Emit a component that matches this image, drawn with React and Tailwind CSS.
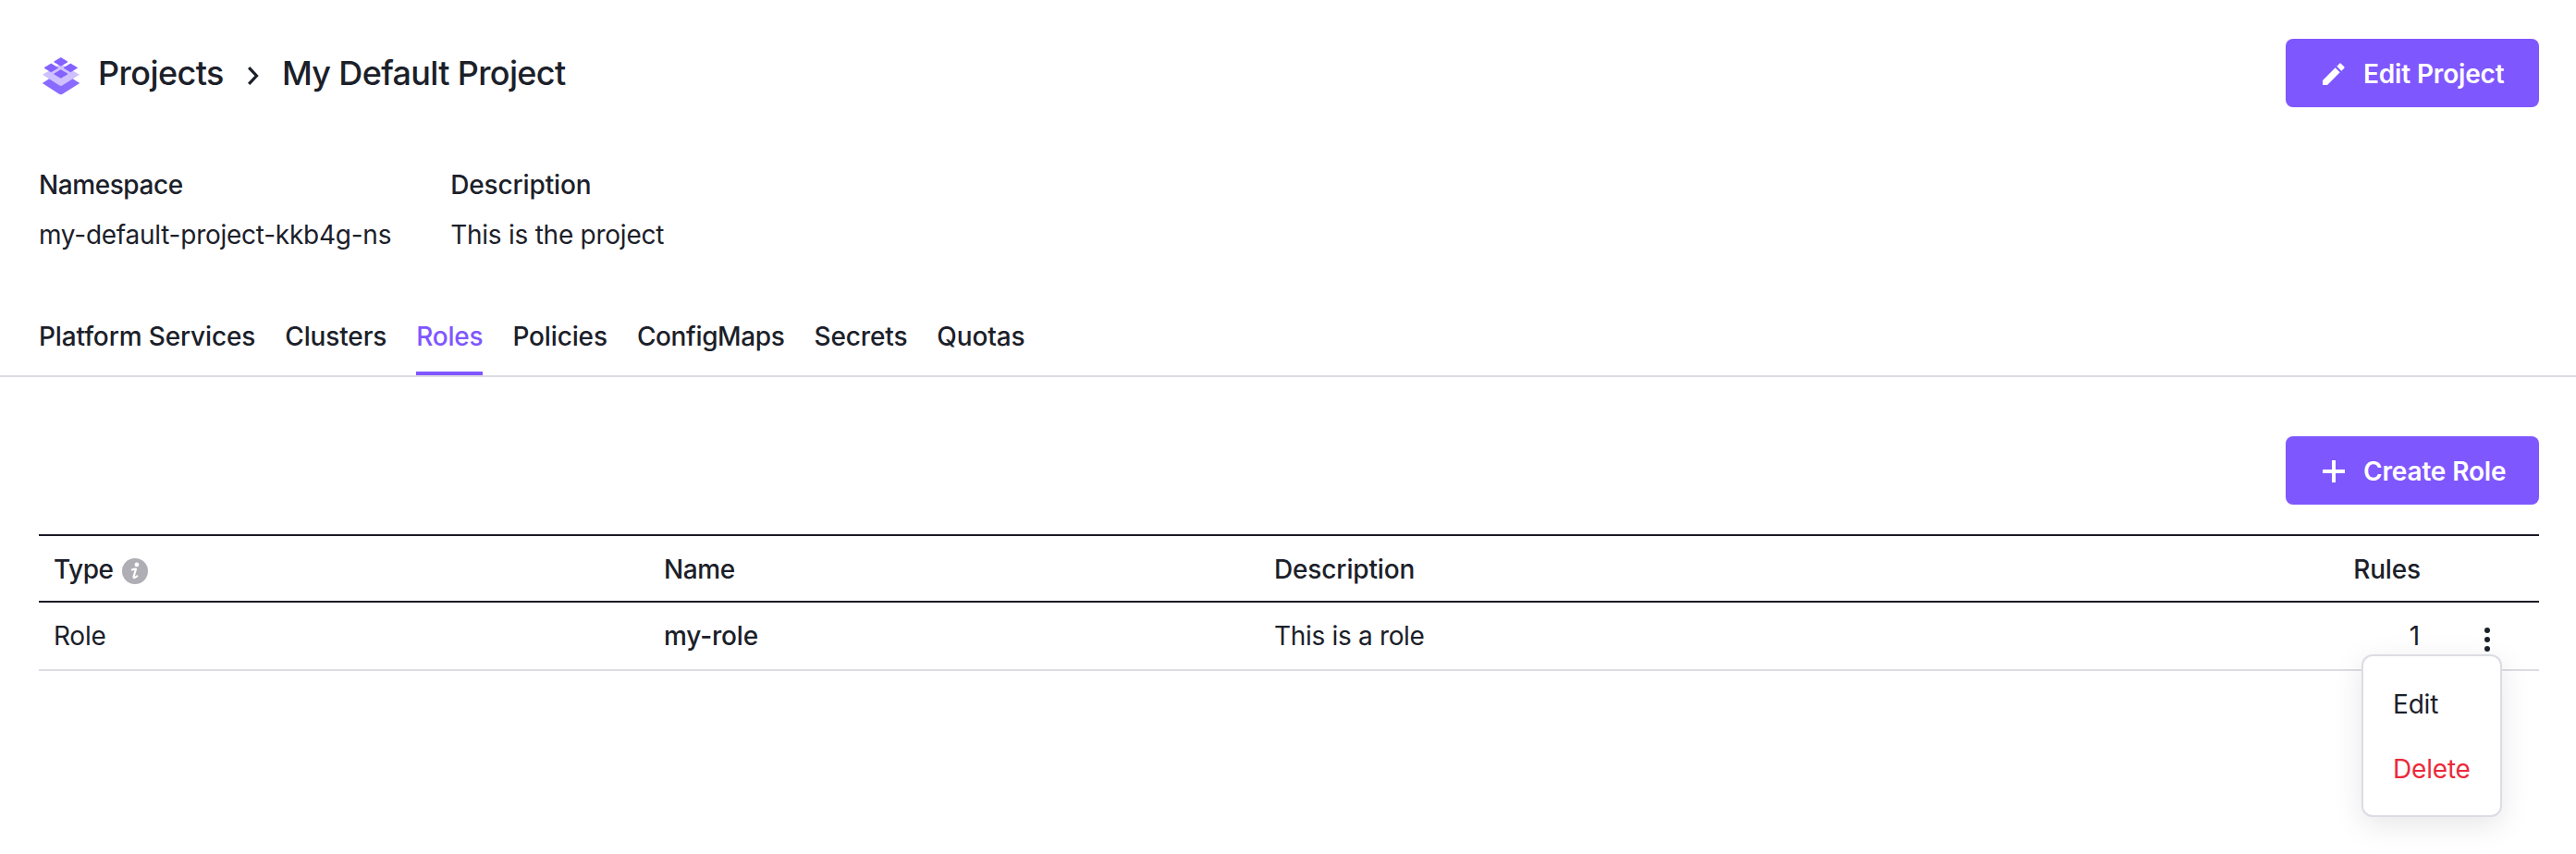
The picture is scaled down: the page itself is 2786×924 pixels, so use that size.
const tabs = ["Platform Services", "Clusters", "Roles", "Policies", "ConfigMaps", "Secrets", "Quotas"];

function tabClass(tab) {
  if (tab === "Roles") return "h-[74px] border-b-4 border-[#7f57ff] pt-[11px] font-medium tracking-[-0.22px] text-[#7f57ff]";
  if (tab === "ConfigMaps") return "h-[74px] pt-[11px] font-medium tracking-[-0.36px]";
  return "h-[74px] pt-[11px] font-medium tracking-[-0.14px]";
}

function ProjectsIcon() {
  return (
    <svg width="42" height="42" viewBox="0 0 42 42" className="shrink-0">
      <path d="M0.800 29 L20.700 16 L41.200 29 L23 40.500 Q20.800 41.900 18.600 40.500 Z" fill="#8a6bff" />
      <path d="M1 19.800 L20.800 8 L41 19.800 L22.200 31.600 Q20.800 32.400 19.400 31.600 Z" fill="#cfc1ff" />
      <g fill="#8462ff" stroke="#8462ff" strokeWidth="1" strokeLinejoin="round">
        <path d="M20.800 1.600 L28 5.900 L20.800 10.200 L13.600 5.900 Z" />
        <path d="M10.300 8.100 L17.500 12.400 L10.300 16.700 L3.100 12.400 Z" />
        <path d="M31.300 8.100 L38.500 12.400 L31.300 16.700 L24.100 12.400 Z" />
        <path d="M20.800 14.700 L28 19 L20.800 23.300 L13.600 19 Z" />
      </g>
    </svg>
  );
}

function Button({ icon, children }) {
  return (
    <button className="flex h-[74px] w-[274px] items-center rounded-lg bg-[#7f57ff] pl-10 text-[28px] leading-[42px] font-semibold tracking-[-0.16px] text-white">
      <svg width="24" height="24" viewBox="0 0 24 24" fill="#fff" className="mt-[2px] mr-5 shrink-0">
        {icon}
      </svg>
      <span className="mt-[2px] whitespace-nowrap">{children}</span>
    </button>
  );
}

export default function App() {
  return (
    <div className="h-[924px] w-[2786px] overflow-hidden bg-white font-['Inter',sans-serif] text-[28px] leading-[42px] tracking-[-0.25px] text-[#1b2029]">
      <header className="flex items-start justify-between pt-[42px] pr-10 pl-[45px]">
        <div className="flex h-[74px] items-center text-[36px] font-medium">
          <div className="mt-[6px]">
            <ProjectsIcon />
          </div>
          <span className="ml-[19px] tracking-[-0.56px]">Projects</span>
          <svg width="12" height="20" viewBox="0 0 12 20" className="mt-[6px] ml-[26px]" fill="none" stroke="#1b2029" strokeWidth="3.2">
            <path d="M1.200 1.100 L9.500 10 L1.200 18.900" />
          </svg>
          <span className="ml-[25px] tracking-[-0.66px]">My Default Project</span>
        </div>
        <Button
          icon={
            <>
              <path d="M0 19 L13.700 5.300 L18.700 10.300 L5 24 H0 Z" />
              <path d="M15.300 3.700 L18.300 0.700 Q19 0 19.700 0.700 L23.300 4.300 Q24 5 23.300 5.700 L20.300 8.700 Z" />
            </>
          }
        >
          Edit Project
        </Button>
      </header>

      <dl className="mt-[63px] flex gap-16 pl-[42px]">
        <div>
          <dt className="font-medium tracking-[-0.42px]">Namespace</dt>
          <dd className="mt-3">my-default-project-kkb4g-ns</dd>
        </div>
        <div>
          <dt className="font-medium tracking-[-0.14px]">Description</dt>
          <dd className="mt-3">This is the project</dd>
        </div>
      </dl>

      <nav className="mt-[57px] flex h-[76px] gap-8 border-b-2 border-[#dcdce3] pl-[42px]">
        {tabs.map((tab) => (
          <a key={tab} className={tabClass(tab)}>
            {tab}
          </a>
        ))}
      </nav>

      <main className="pt-16 pr-10 pl-[42px]">
        <div className="flex justify-end">
          <Button icon={<path d="M10 0 H14 V10 H24 V14 H14 V24 H10 V14 H0 V10 H10 Z" />}>Create Role</Button>
        </div>

        <div className="mt-8">
          <div className="grid h-[74px] grid-cols-[660px_660px_1fr_128px] items-center border-y-2 border-[#1b1b26] pt-[2px] font-medium tracking-[-0.14px]">
            <div className="flex items-center pl-4">
              <span className="w-[64px] tracking-[-0.5px]">Type</span>
              <svg width="28" height="28" viewBox="0 0 28 28" className="mt-[3px] ml-[10px]">
                <circle cx="14" cy="14" r="14" fill="#aeaeb4" />
                <circle cx="15.900" cy="6.900" r="2.400" fill="#fff" />
                <path d="M11 12.600 Q13.800 11.200 15 11.800 L12.500 20 Q12.200 22.500 16.300 19.400" fill="none" stroke="#fff" strokeWidth="2.200" strokeLinecap="round" strokeLinejoin="round" />
              </svg>
            </div>
            <div className="pl-4 tracking-[-0.4px]">Name</div>
            <div className="flex justify-between pl-4">
              <span>Description</span>
              <span>Rules</span>
            </div>
            <div />
          </div>
          <div className="grid h-[74px] grid-cols-[660px_660px_1fr_128px] items-center border-b-2 border-[#dcdce3]">
            <div className="pl-4">Role</div>
            <div className="pl-4 font-medium tracking-[-0.15px]">my-role</div>
            <div className="flex justify-between pl-4">
              <span className="tracking-[-0.32px]">This is a role</span>
              <span className="pr-px">1</span>
            </div>
            <div className="relative pl-[69px]">
              <svg width="6" height="26" viewBox="0 0 6 26" fill="#1b2029" className="mt-[8px]">
                <circle cx="3" cy="3" r="3" />
                <circle cx="3" cy="13" r="3" />
                <circle cx="3" cy="23" r="3" />
              </svg>
              <div className="absolute top-[37px] right-10 flex h-[176px] w-[152px] flex-col gap-7 rounded-xl border-2 border-[#dcdce3] bg-white pt-[31px] pl-8 tracking-[-0.18px] shadow-[0_8px_32px_rgba(0,0,0,0.10)]">
                <span>Edit</span>
                <span className="text-[#eb293a]">Delete</span>
              </div>
            </div>
          </div>
        </div>
      </main>
    </div>
  );
}
